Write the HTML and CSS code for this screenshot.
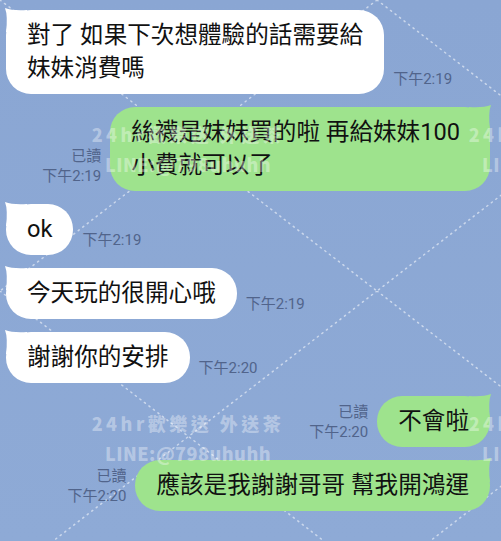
FILE: index.html
```html
<!DOCTYPE html>
<html lang="zh-Hant">
<head>
  <meta charset="UTF-8" />
  <meta name="viewport" content="width=device-width, initial-scale=1.0"/>
  <title>LINE 對話</title>
  <link rel="stylesheet" href="styles.css">
</head>
<body>

  <div class="chat">
    <!-- dotted diamond lattice of the watermark -->
    <svg class="lattice" width="501" height="541" aria-hidden="true">
      <defs>
        <pattern id="diamonds" width="377" height="291" patternUnits="userSpaceOnUse">
          <line x1="0" y1="0" x2="377" y2="291" />
          <line x1="377" y1="0" x2="0" y2="291" />
        </pattern>
      </defs>
      <rect width="501" height="541" fill="url(#diamonds)" />
    </svg>

    <div class="msg in">
      <div class="bubble">對了 如果下次想體驗的話需要給<br>妹妹消費嗎</div>
      <div class="meta"><span>下午2:19</span></div>
    </div>

    <div class="msg out">
      <div class="meta"><span>已讀</span><span>下午2:19</span></div>
      <div class="bubble wide">絲襪是妹妹買的啦 再給妹妹100<br>小費就可以了</div>
    </div>

    <div class="msg in">
      <div class="bubble">ok</div>
      <div class="meta"><span>下午2:19</span></div>
    </div>

    <div class="msg in">
      <div class="bubble">今天玩的很開心哦</div>
      <div class="meta"><span>下午2:19</span></div>
    </div>

    <div class="msg in">
      <div class="bubble">謝謝你的安排</div>
      <div class="meta"><span>下午2:20</span></div>
    </div>

    <div class="msg out">
      <div class="meta"><span>已讀</span><span>下午2:20</span></div>
      <div class="bubble">不會啦</div>
    </div>

    <div class="msg out">
      <div class="meta"><span>已讀</span><span>下午2:20</span></div>
      <div class="bubble">應該是我謝謝哥哥 幫我開鴻運</div>
    </div>

    <!-- watermark text, repeated over the chat -->
    <div class="mark mark-a"><span class="mark-title">24hr歡樂送 外送茶</span><span class="mark-id">LINE:@798uhuhh</span></div>
    <div class="mark mark-b"><span class="mark-title">24hr歡樂送 外送茶</span><span class="mark-id">LINE:@798uhuhh</span></div>
    <div class="mark mark-c"><span class="mark-title">24hr歡樂送 外送茶</span><span class="mark-id">LINE:@798uhuhh</span></div>
    <div class="mark mark-d"><span class="mark-title">24hr歡樂送 外送茶</span><span class="mark-id">LINE:@798uhuhh</span></div>
  </div>

</body>
</html>
```

FILE: styles.css
```css
:root {
  --in: #ffffff;
  --out: #9ee38d;
  --meta: #51648b;
  --text: #111;
}

body {
  margin: 0;
  padding: 0;
  font-family: Roboto, 'Noto Sans CJK TC', 'Noto Sans', sans-serif;
}

.chat {
  position: relative;
  width: 501px;
  height: 541px;
  overflow: hidden;
  box-sizing: border-box;
  padding: 10px 11px 0 6px;
  display: flex;
  flex-direction: column;
  gap: 13px;
  background: linear-gradient(#8aa6d3, #8eaad6);
}

.lattice {
  position: absolute;
  left: 0;
  top: 0;
}

.lattice line {
  stroke: rgba(255, 255, 255, 0.55);
  stroke-width: 1.5;
  stroke-dasharray: 1.2 4.5;
  stroke-linecap: round;
}

.msg {
  position: relative;
  display: flex;
  align-items: flex-end;
  gap: 9px;
}

.msg.out {
  justify-content: flex-end;
}

.bubble {
  position: relative;
  padding: 9px 21px;
  border-radius: 25px;
  font-size: 23.6px;
  line-height: 33px;
  color: var(--text);
  white-space: nowrap;
}

.in .bubble {
  background: var(--in);
}

.out .bubble {
  background: var(--out);
}

.bubble.wide {
  padding-right: 30px;
}

/* little tail on the top corner */
.bubble::before {
  content: "";
  position: absolute;
  top: -2px;
  width: 22px;
  height: 24px;
  background: inherit;
}

.in .bubble::before {
  left: -1px;
  clip-path: path('M0 0 Q 8 3 22 2 L 22 24 L 1 24 Q 3 8 0 0 Z');
}

.out .bubble::before {
  right: -1px;
  clip-path: path('M22 0 Q 14 3 0 2 L 0 24 L 21 24 Q 19 8 22 0 Z');
}

.meta {
  display: flex;
  flex-direction: column;
  align-items: flex-end;
  margin-bottom: 5px;
  font-size: 15px;
  line-height: 20px;
  color: var(--meta);
}

.in .meta {
  align-items: flex-start;
}

.mark {
  position: absolute;
  transform: translate(-50%, -50%);
  display: flex;
  flex-direction: column;
  align-items: center;
  white-space: nowrap;
  font-family: 'Noto Sans CJK TC', sans-serif;
  font-weight: 900;
  font-size: 18px;
  line-height: 30px;
  color: rgba(255, 255, 255, 0.36);
  pointer-events: none;
}

.mark-title {
  letter-spacing: 3.5px;
}

.mark-id {
  letter-spacing: 0.5px;
}

.mark-a { left: 188px; top: 149px; }
.mark-b { left: 565px; top: 149px; }
.mark-c { left: 188px; top: 438px; }
.mark-d { left: 565px; top: 438px; }
```
